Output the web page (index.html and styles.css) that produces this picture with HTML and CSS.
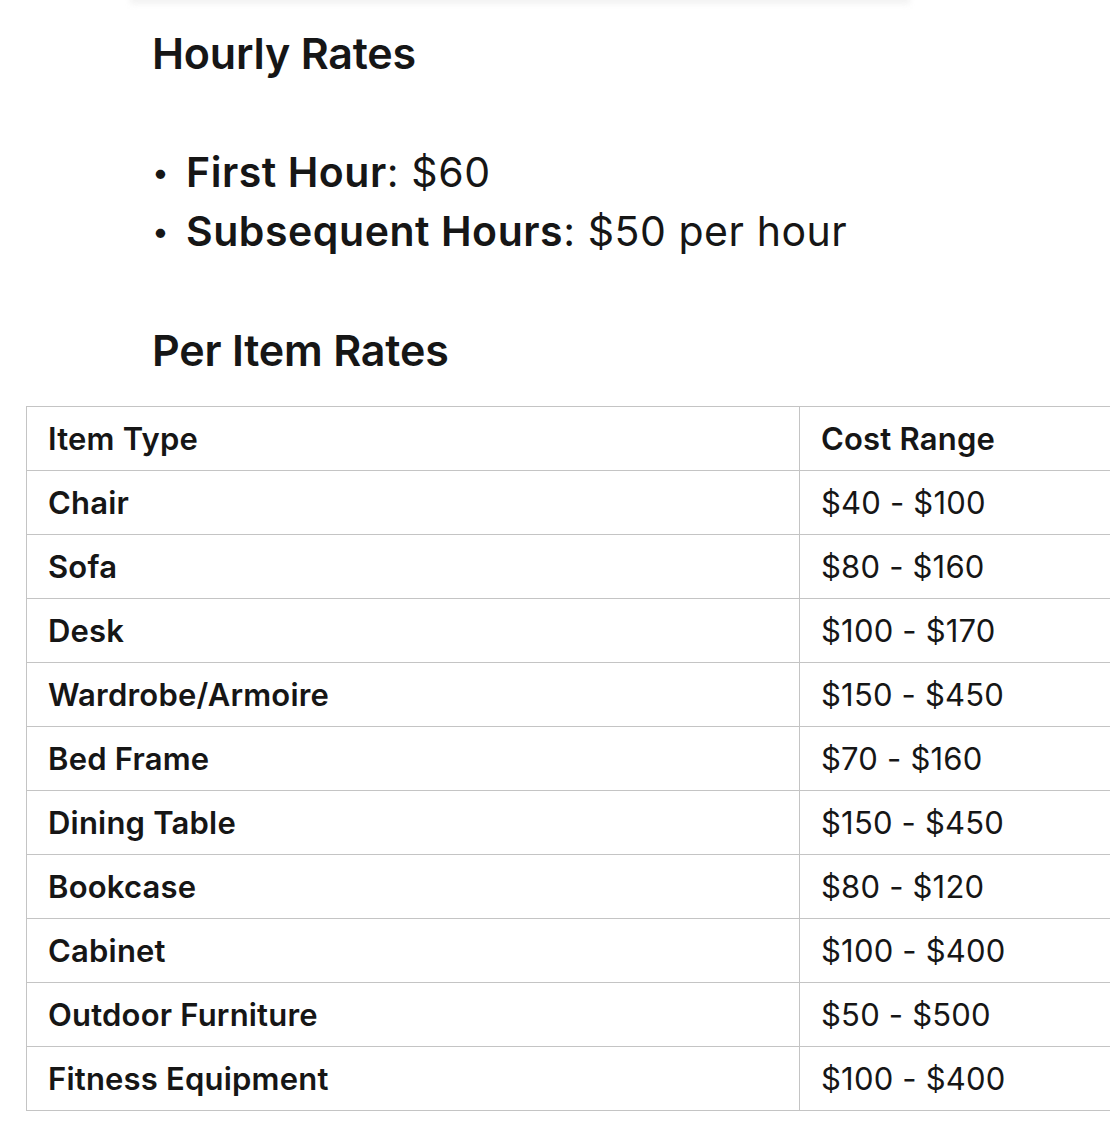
FILE: index.html
```html
<!DOCTYPE html>
<html lang="en">
<head>
<meta charset="utf-8">
<title>Rates</title>
<link rel="stylesheet" href="styles.css">
</head>
<body>
<div class="top-shade"></div>
<main class="page">
  <section class="content">
    <h2 class="heading heading-hourly">Hourly Rates</h2>
    <ul class="rates">
      <li class="rate"><span><strong>First Hour</strong>: $60</span></li>
      <li class="rate"><span><strong>Subsequent Hours</strong>: $50 per hour</span></li>
    </ul>
    <h2 class="heading heading-item">Per Item Rates</h2>
  </section>
  <table class="items">
    <thead>
      <tr><th class="col-type">Item Type</th><th class="col-cost">Cost Range</th></tr>
    </thead>
    <tbody>
      <tr><td class="name">Chair</td><td>$40 - $100</td></tr>
      <tr><td class="name">Sofa</td><td>$80 - $160</td></tr>
      <tr><td class="name">Desk</td><td>$100 - $170</td></tr>
      <tr><td class="name">Wardrobe/Armoire</td><td>$150 - $450</td></tr>
      <tr><td class="name">Bed Frame</td><td>$70 - $160</td></tr>
      <tr><td class="name">Dining Table</td><td>$150 - $450</td></tr>
      <tr><td class="name">Bookcase</td><td>$80 - $120</td></tr>
      <tr><td class="name">Cabinet</td><td>$100 - $400</td></tr>
      <tr><td class="name">Outdoor Furniture</td><td>$50 - $500</td></tr>
      <tr><td class="name">Fitness Equipment</td><td>$100 - $400</td></tr>
    </tbody>
  </table>
</main>
</body>
</html>
```
FILE: styles.css
```css
html, body {
  margin: 0;
  padding: 0;
  background: #ffffff;
  overflow: hidden;
}
body {
  font-family: Inter, "Noto Sans", "Liberation Sans", sans-serif;
  color: #161616;
  position: relative;
}
.top-shade {
  position: absolute;
  left: 130px;
  top: -6px;
  width: 780px;
  height: 10px;
  background: #f2f2f2;
  filter: blur(3px);
}
.page {
  padding-top: 28px;
}
.content {
  padding-left: 152px;
}
.heading {
  margin: 0;
  font-size: 43px;
  font-weight: 600;
  line-height: 50px;
  letter-spacing: -0.2px;
}
.rates {
  list-style: none;
  margin: 65px 0 0 0;
  padding: 0;
}
.rate {
  display: flex;
  font-size: 41px;
  line-height: 59px;
  letter-spacing: 0.55px;
}
.rate::before {
  content: "\2022";
  width: 34px;
  padding-left: 0;
  font-size: 30px;
  flex: none;
}
.rate strong {
  font-weight: 600;
}
.heading-item {
  margin-top: 64px;
}
.items {
  margin-top: 31px;
  margin-left: 26px;
  width: 1100px;
  border-collapse: collapse;
  border-left: 1px solid #c4c4c4;
}
.items th, .items td {
  height: 63px;
  padding: 0 0 0 21px;
  text-align: left;
  font-size: 31px;
  letter-spacing: 0.2px;
  border-top: 1px solid #c4c4c4;
  border-bottom: 1px solid #c4c4c4;
  vertical-align: middle;
}
.items th {
  font-weight: 600;
}
.items td {
  font-weight: 400;
}
.items td.name {
  font-weight: 600;
}
.col-type, .items td.name {
  width: 751px;
  border-right: 1px solid #c4c4c4;
}
```
